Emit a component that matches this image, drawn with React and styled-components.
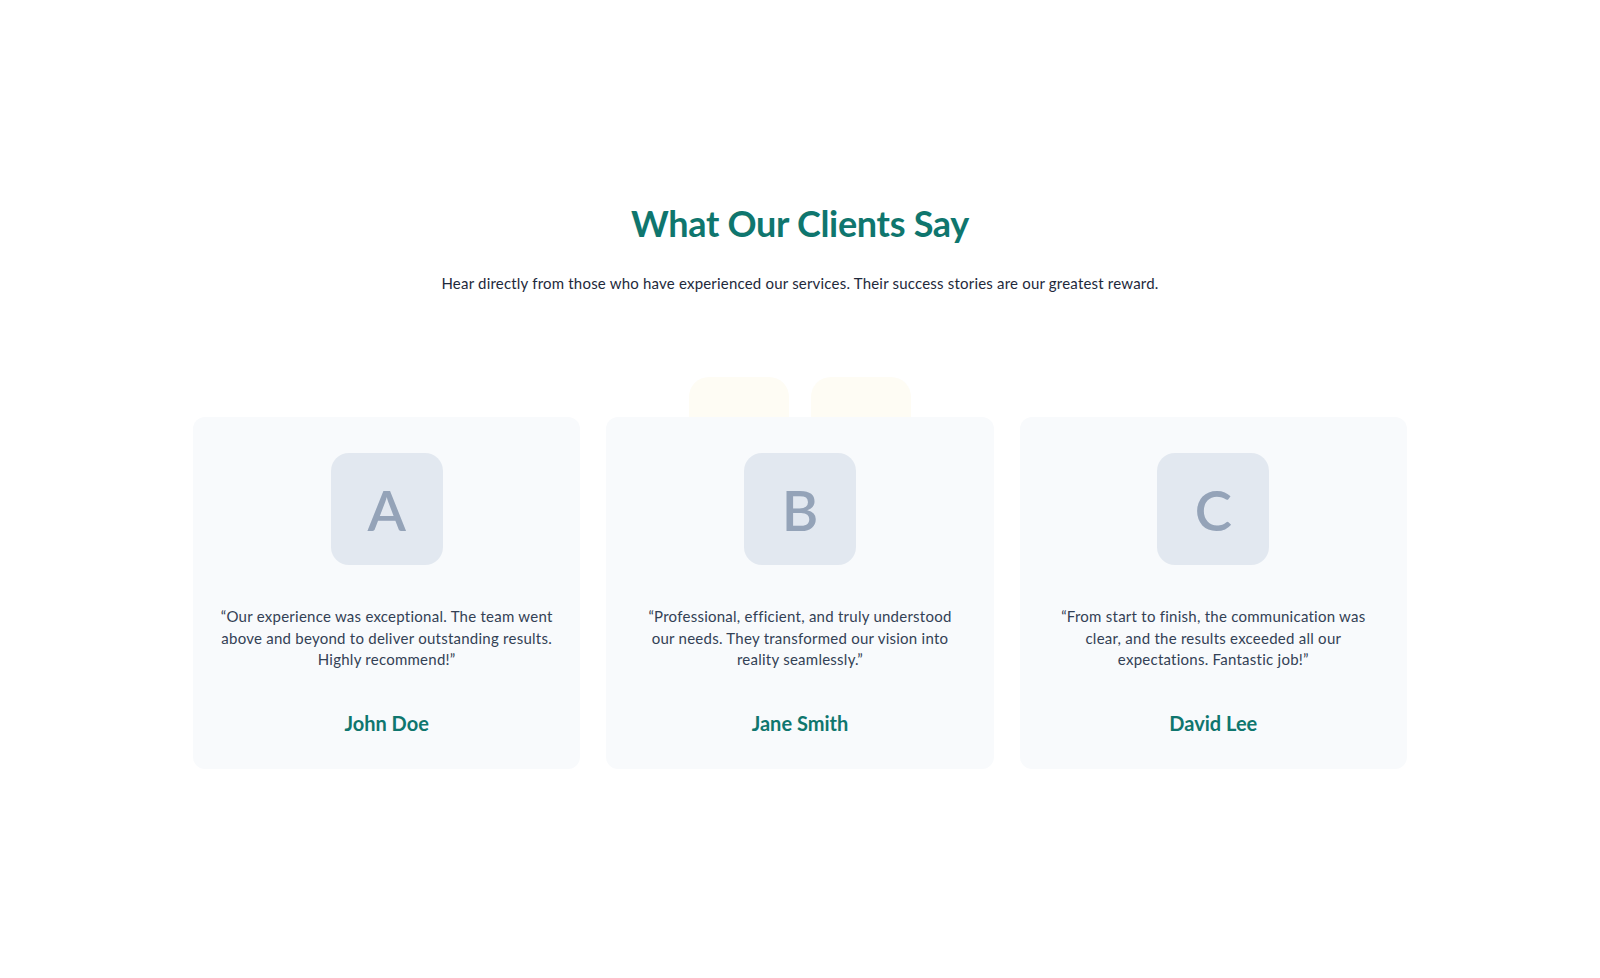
import React from 'react'
import styled, { createGlobalStyle } from 'styled-components'

const GlobalStyle = createGlobalStyle`
    html, body {
        margin: 0;
        padding: 0;
        background: #ffffff;
    }
    body {
        font-family: Lato, "Open Sans", "Liberation Sans", sans-serif;
        -webkit-font-smoothing: antialiased;
    }
`

const testimonials = [
    {
        letter: 'A',
        quote: '\u201cOur experience was exceptional. The team went above and beyond to deliver outstanding results. Highly recommend!\u201d',
        name: 'John Doe',
    },
    {
        letter: 'B',
        quote: '\u201cProfessional, efficient, and truly understood our needs. They transformed our vision into reality seamlessly.\u201d',
        name: 'Jane Smith',
    },
    {
        letter: 'C',
        quote: '\u201cFrom start to finish, the communication was clear, and the results exceeded all our expectations. Fantastic job!\u201d',
        name: 'David Lee',
    },
]

const App = () => {
    return (
        <Section>
            <GlobalStyle />
            <Title>What Our Clients Say</Title>
            <Subtitle>
                Hear directly from those who have experienced our services. Their success stories are our greatest reward.
            </Subtitle>

            <CardsArea>
                {/* soft tabs peeking out behind the middle card */}
                <Decor>
                    <Blob />
                    <Blob />
                </Decor>
                <Grid>
                    {testimonials.map((t) => (
                        <Card key={t.name}>
                            <Avatar>{t.letter}</Avatar>
                            <Quote>{t.quote}</Quote>
                            <Name>{t.name}</Name>
                        </Card>
                    ))}
                </Grid>
            </CardsArea>
        </Section>
    )
}

export default App

const Section = styled.section`
    min-height: 978px;
    box-sizing: border-box;
    padding-top: 199px;
    display: flex;
    flex-direction: column;
    align-items: center;
`
const Title = styled.h2`
    margin: 0;
    font-size: 36px;
    line-height: 48px;
    font-weight: 700;
    color: #0f766e;
    letter-spacing: -0.3px;
`
const Subtitle = styled.p`
    margin: 24px 0 0;
    font-size: 15px;
    line-height: 24px;
    letter-spacing: 0.2px;
    color: #1e293b;
`
const CardsArea = styled.div`
    position: relative;
    margin-top: 122px;
    width: 1214px;
`
const Decor = styled.div`
    position: absolute;
    top: -40px;
    left: 0;
    right: 0;
    display: flex;
    justify-content: center;
    gap: 22px;
    z-index: 0;
`
const Blob = styled.div`
    width: 100px;
    height: 80px;
    border-radius: 20px;
    background: #fefcf4;
`
const Grid = styled.div`
    position: relative; // keeps the cards above the tabs
    z-index: 1;
    display: grid;
    grid-template-columns: repeat(3, 1fr);
    gap: 26px;
`
const Card = styled.div`
    background: #f8fafc;
    border-radius: 12px;
    padding: 36px 26px 32px;
    display: flex;
    flex-direction: column;
    align-items: center;
    text-align: center;
`
const Avatar = styled.div`
    width: 112px;
    height: 112px;
    border-radius: 18px;
    background: #e2e8f0;
    color: #94a3b8;
    display: flex;
    align-items: center;
    justify-content: center;
    font-size: 56px;
    font-weight: 600;
`
const Quote = styled.p`
    margin: 41px 0 0;
    font-size: 15px;
    line-height: 21.5px;
    letter-spacing: 0.25px;
    color: #334155;
    text-wrap: pretty;
`
const Name = styled.div`
    margin-top: 38px;
    font-size: 20px;
    line-height: 28px;
    font-weight: 700;
    color: #0f766e;
`
